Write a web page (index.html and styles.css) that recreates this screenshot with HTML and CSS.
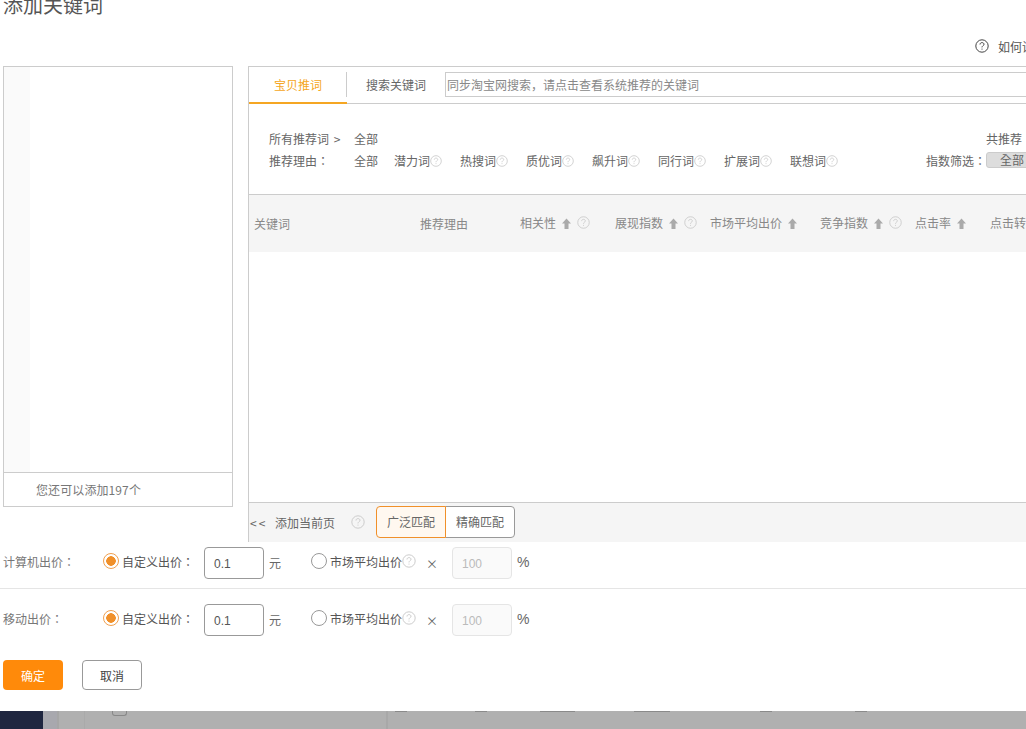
FILE: index.html
```html
<!DOCTYPE html>
<html lang="zh">
<head>
<meta charset="utf-8">
<title>添加关键词</title>
<link rel="stylesheet" href="styles.css">
</head>
<body>
<svg class="defs" width="0" height="0" aria-hidden="true">
  <symbol id="q" viewBox="0 0 14 14">
    <circle cx="7" cy="7" r="6.2" fill="none" stroke="currentColor" stroke-width="1"/>
    <path d="M5 5.5C5 4.3 5.9 3.6 7 3.6S9 4.3 9 5.3C9 6.6 7 6.7 7 8.4" fill="none" stroke="currentColor" stroke-width="1"/>
    <rect x="6.5" y="9.6" width="1" height="1" fill="currentColor"/>
  </symbol>
  <symbol id="up" viewBox="0 0 9 11">
    <path d="M4.5 0.5L9 5.5H6.5V11H2.5V5.5H0Z" fill="currentColor"/>
  </symbol>
</svg>
<div class="dialog">
  <h1 class="title">添加关键词</h1>
  <div class="help"><svg class="q-big"><use href="#q"/></svg><span>如何设置关键词</span></div>
  <div class="panels">
    <section class="left">
      <div class="left-body"><div class="left-strip"></div></div>
      <div class="left-foot">您还可以添加197个</div>
    </section>
    <section class="right">
      <div class="tabs">
        <div class="tab active">宝贝推词</div>
        <div class="tab-sep"></div>
        <div class="tab">搜索关键词</div>
        <div class="search">同步淘宝网搜索，请点击查看系统推荐的关键词</div>
      </div>
      <div class="filter">
        <div class="frow crumbs">
          <span class="flabel">所有推荐词 &gt;</span><span>全部</span>
          <span class="fright total">共推荐</span>
        </div>
        <div class="frow">
          <span class="flabel" lang="zh-Hant">推荐理由：</span>
          <span class="reason r0">全部</span>
          <span class="reason">潜力词<svg class="q"><use href="#q"/></svg></span>
          <span class="reason">热搜词<svg class="q"><use href="#q"/></svg></span>
          <span class="reason">质优词<svg class="q"><use href="#q"/></svg></span>
          <span class="reason">飙升词<svg class="q"><use href="#q"/></svg></span>
          <span class="reason">同行词<svg class="q"><use href="#q"/></svg></span>
          <span class="reason">扩展词<svg class="q"><use href="#q"/></svg></span>
          <span class="reason">联想词<svg class="q"><use href="#q"/></svg></span>
          <span class="fright index" lang="zh-Hant">指数筛选：<span class="pill">全部</span></span>
        </div>
      </div>
      <div class="thead">
        <span class="th c1">关键词</span>
        <span class="th c2">推荐理由</span>
        <span class="th sort c3">相关性<svg class="up"><use href="#up"/></svg><svg class="q"><use href="#q"/></svg></span>
        <span class="th sort c4">展现指数<svg class="up"><use href="#up"/></svg><svg class="q"><use href="#q"/></svg></span>
        <span class="th sort c5">市场平均出价<svg class="up"><use href="#up"/></svg></span>
        <span class="th sort c6">竞争指数<svg class="up"><use href="#up"/></svg><svg class="q"><use href="#q"/></svg></span>
        <span class="th sort c7">点击率<svg class="up"><use href="#up"/></svg></span>
        <span class="th sort c8">点击转化率</span>
      </div>
      <div class="tbody"></div>
      <div class="tfoot">
        <span class="add">&lt;&lt;</span>
        <span class="addtxt">添加当前页</span>
        <svg class="q q-foot"><use href="#q"/></svg>
        <div class="seg">
          <span class="seg-btn on">广泛匹配</span><span class="seg-btn">精确匹配</span>
        </div>
      </div>
    </section>
  </div>
  <div class="bid first">
    <span class="bid-label" lang="zh-Hant">计算机出价：</span>
    <span class="radio on"></span><span class="opt" lang="zh-Hant">自定义出价：</span>
    <span class="num">0.1</span><span class="unit">元</span>
    <span class="radio"></span><span class="opt2">市场平均出价</span><svg class="q q-bid"><use href="#q"/></svg>
    <span class="times">×</span><span class="num off">100</span><span class="pct">%</span>
  </div>
  <div class="bid-rule"></div>
  <div class="bid">
    <span class="bid-label" lang="zh-Hant">移动出价：</span>
    <span class="radio on"></span><span class="opt" lang="zh-Hant">自定义出价：</span>
    <span class="num">0.1</span><span class="unit">元</span>
    <span class="radio"></span><span class="opt2">市场平均出价</span><svg class="q q-bid"><use href="#q"/></svg>
    <span class="times">×</span><span class="num off">100</span><span class="pct">%</span>
  </div>
  <div class="actions">
    <button class="btn primary">确定</button>
    <button class="btn">取消</button>
  </div>
</div>
<div class="backdrop">
  <div class="bd-nav"></div>
  <div class="bd-side"></div>
  <div class="bd-gap"></div>
  <div class="bd-col"><span class="bd-check"></span></div>
  <div class="bd-rest">
    <i class="mark m1"></i><i class="mark m2"></i><i class="mark m3"></i><i class="mark m4"></i><i class="mark m5"></i><i class="mark m6"></i>
  </div>
</div>
</body>
</html>
```
FILE: styles.css
```css
* { box-sizing: border-box; }
html, body { margin: 0; height: 729px; overflow: hidden; background: #fff; }
body { font-family: "Noto Sans CJK SC", "Liberation Sans", sans-serif; font-size: 12px; color: #666; width: 1026px; }
.defs { position: absolute; }
.dialog { height: 711px; padding-left: 3px; overflow: hidden; }
.title { margin: -7px 0 0; font-size: 20px; line-height: 24px; font-weight: 400; color: #555; }
.help { height: 24px; margin-top: 17px; padding-left: 972px; display: flex; align-items: center; white-space: nowrap; color: #555; }
.q-big { width: 14px; height: 14px; margin-right: 9px; color: #444; flex: none; }
.panels { display: flex; width: 1300px; margin-top: 8px; align-items: flex-start; }
.left { width: 230px; height: 441px; border: 1px solid #ccc; display: flex; flex-direction: column; flex: none; }
.left-body { flex: 1; display: flex; }
.left-strip { width: 26px; background: #fafafa; }
.left-foot { height: 34px; border-top: 1px solid #ccc; padding-left: 32px; line-height: 33px; color: #777; letter-spacing: 0.1px; }
.right { width: 1000px; height: 476px; margin-left: 15px; border: 1px solid #ccc; border-bottom: 0; display: flex; flex-direction: column; flex: none; }
.tabs { height: 37px; border-bottom: 1px solid #ccc; display: flex; flex: none; }
.tab { line-height: 35px; color: #666; padding-left: 19px; width: 98px; }
.tab.active { padding-left: 25px; color: #f5a623; border-bottom: 2px solid #f5a623; height: 37px; }
.tab-sep { width: 1px; height: 25px; margin-top: 5px; background: #ccc; margin-left: -1px; }
.search { margin-top: 5px; height: 25px; width: 700px; border: 1px solid #ccc; padding-left: 1px; line-height: 23px; color: #888; white-space: nowrap; }
.filter { height: 90px; padding-top: 24px; flex: none; }
.frow { display: flex; height: 22px; line-height: 22px; padding-left: 20px; white-space: nowrap; position: relative; }
.flabel { width: 85px; word-spacing: 2px; }
.flabel:lang(zh-Hant), .index, .bid-label, .opt { font-family: "Noto Sans CJK TC", sans-serif; }
.reason { width: 66px; display: flex; align-items: center; }
.r0 { width: 40px; }
.q { width: 12px; height: 12px; color: #ccc; flex: none; }
.fright { position: absolute; left: 677px; }
.total { left: 737px; }
.pill { display: inline-block; width: 60px; height: 16px; line-height: 14px; margin-top: 2px; vertical-align: top; background: #ddd; border: 1px solid #ccc; border-radius: 3px; text-align: center; padding-right: 8px; }
.thead { height: 58px; background: #f5f5f5; border-top: 1px solid #ccc; display: flex; flex: none; white-space: nowrap; color: #888; }
.th { display: flex; align-items: center; height: 56px; }
.th.sort { height: 55px; }
.th .q { width: 13px; height: 13px; }
.c1 { width: 171px; padding-left: 5px; }
.c2 { width: 100px; }
.c3 { width: 95px; }
.c4 { width: 95px; }
.c5 { width: 110px; }
.c6 { width: 95px; }
.c7 { width: 75px; }
.up { width: 9px; height: 11px; color: #aaa; margin: 2px 6px 0 6px; flex: none; }
.tbody { flex: 1; }
.tfoot { height: 40px; background: #f5f5f5; border-top: 1px solid #ccc; display: flex; align-items: center; flex: none; padding-left: 1px; white-space: nowrap; }
.add { width: 25px; letter-spacing: 2px; }
.addtxt { width: 76px; }
.q-foot { width: 14px; height: 14px; margin-right: 11px; margin-top: -2px; }
.seg { display: flex; height: 32px; margin-top: -1px; }
.seg-btn { width: 70px; height: 32px; line-height: 30px; text-align: center; border: 1px solid #999; background: #fff; border-radius: 0 4px 4px 0; margin-left: -1px; }
.seg-btn.on { margin-left: 0; border-color: #f0902a; background: #fff8f0; border-radius: 4px 0 0 4px; position: relative; z-index: 1; }
.bid { display: flex; align-items: center; height: 32px; margin-top: 15px; white-space: nowrap; }
.bid.first { margin-top: 5px; }
.bid-rule { height: 1px; margin: 9px 0 0 -3px; background: #e5e5e5; }
.bid-label { width: 100px; color: #777; padding-bottom: 4px; }
.radio { width: 16px; height: 16px; border-radius: 50%; border: 1px solid #999; background: #fff; flex: none; margin-bottom: 4px; }
.radio.on { border-color: #f0a050; background: radial-gradient(circle, #f0902a 0 4.5px, #fff 5px); }
.opt { width: 82px; margin-left: 3px; color: #555; padding-bottom: 4px; }
.num { width: 60px; height: 32px; border: 1px solid #999; border-radius: 4px; line-height: 32px; padding-left: 9px; color: #555; font-family: "Liberation Sans", sans-serif; }
.num.off { border-color: #e5e5e5; background: #fafafa; color: #bbb; }
.unit { width: 42px; margin-left: 5px; color: #666; padding-bottom: 2px; }
.opt2 { width: 72px; margin-left: 3px; color: #555; padding-bottom: 4px; }
.q-bid { width: 14px; height: 14px; margin-bottom: 4px; }
.times { width: 36px; padding-left: 10px; }
.pct { margin-left: 5px; font-size: 14px; font-family: "Liberation Sans", sans-serif; padding-bottom: 2px; }
.actions { display: flex; margin-top: 24px; gap: 19px; }
.btn { width: 60px; height: 30px; border: 1px solid #999; border-radius: 4px; background: #fff; padding: 0; color: #444; font: inherit; }
.btn.primary { border: 0; background: #ff8a0a; color: #fff; }
.backdrop { height: 18px; background: #b0b0b0; display: flex; overflow: hidden; }
.bd-nav { width: 43px; background: #1f2640; }
.bd-side { width: 16px; background: #a8a8ae; border-right: 2px solid #a6a6a6; }
.bd-gap { width: 26px; border-right: 1px solid #aaa; }
.bd-col { width: 303px; border-right: 2px solid #a8a8a8; padding-left: 27px; }
.bd-check { display: block; width: 15px; height: 5px; border: 1px solid #888; border-top: 0; border-radius: 0 0 3px 3px; }
.bd-rest { flex: 1; display: flex; height: 1px; }
.mark { display: block; height: 1px; background: #8a8a8a; }
.m1 { width: 12px; margin-left: 7px; }
.m2 { width: 12px; margin-left: 68px; }
.m3 { width: 35px; margin-left: 53px; }
.m4 { width: 36px; margin-left: 59px; }
.m5 { width: 12px; margin-left: 90px; }
.m6 { width: 12px; margin-left: 83px; }
```
